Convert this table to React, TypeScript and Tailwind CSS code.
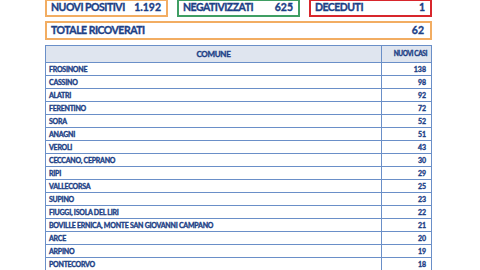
import React from 'react';

const rows: [string, number][] = [
    ['FROSINONE', 138],
    ['CASSINO', 98],
    ['ALATRI', 92],
    ['FERENTINO', 72],
    ['SORA', 52],
    ['ANAGNI', 51],
    ['VEROLI', 43],
    ['CECCANO, CEPRANO', 30],
    ['RIPI', 29],
    ['VALLECORSA', 25],
    ['SUPINO', 23],
    ['FIUGGI, ISOLA DEL LIRI', 22],
    ['BOVILLE ERNICA, MONTE SAN GIOVANNI CAMPANO', 21],
    ['ARCE', 20],
    ['ARPINO', 19],
    ['PONTECORVO', 18],
];

function StatBox({ label, value, border }: { label: string; value: string; border: string }) {
    return (
        <div className={`flex h-[18px] items-center justify-between border-2 ${border} bg-white pl-[4px] pr-[5px]`}>
            <span className="text-[10.5px] font-bold tracking-[-0.5px]">{label}</span>
            <span className="text-[10.5px] font-bold">{value}</span>
        </div>
    );
}

export default function App() {
    return (
        <div
            className="h-[270px] w-[480px] overflow-hidden bg-white text-[#1d3f86] [-webkit-text-stroke:0.35px_#1d3f86]"
            style={{ fontFamily: 'Lato, "Liberation Sans", sans-serif' }}
        >
            <div className="ml-[45px] mt-[-1px] w-[387px]">
                <div className="grid grid-cols-3 gap-[9px]">
                    <StatBox label="NUOVI POSITIVI" value="1.192" border="border-[#f2ad62]" />
                    <StatBox label="NEGATIVIZZATI" value="625" border="border-[#3f9e63]" />
                    <StatBox label="DECEDUTI" value="1" border="border-[#d8262c]" />
                </div>
                <div className="mt-[4px] flex h-[19px] items-center justify-between border-2 border-[#f2ad62] pl-[4px] pr-[6px]">
                    <span className="text-[10.5px] font-bold tracking-[-0.5px]">TOTALE RICOVERATI</span>
                    <span className="text-[10.5px] font-bold">62</span>
                </div>
                <div className="mt-[5px] border border-[#6a8fc8]">
                    <div className="flex h-[16px] bg-[#dfe5ef]">
                        <div className="flex flex-1 items-center justify-center border-r border-[#6a8fc8] text-[8px] font-bold tracking-[-0.3px]">COMUNE</div>
                        <div className="flex w-[49px] items-center justify-end pr-[4px] text-[6.5px] font-bold tracking-[-0.4px]">NUOVI CASI</div>
                    </div>
                    {rows.map(([name, n]) => (
                        <div key={name} className="flex h-[13px] border-t border-[#6a8fc8]">
                            <div className="flex flex-1 items-center border-r border-[#6a8fc8] pl-[3px] text-[7px] font-bold tracking-[-0.25px]">{name}</div>
                            <div className="flex w-[49px] items-center justify-end pr-[5px] text-[7px] font-bold">{n}</div>
                        </div>
                    ))}
                </div>
            </div>
        </div>
    );
}
